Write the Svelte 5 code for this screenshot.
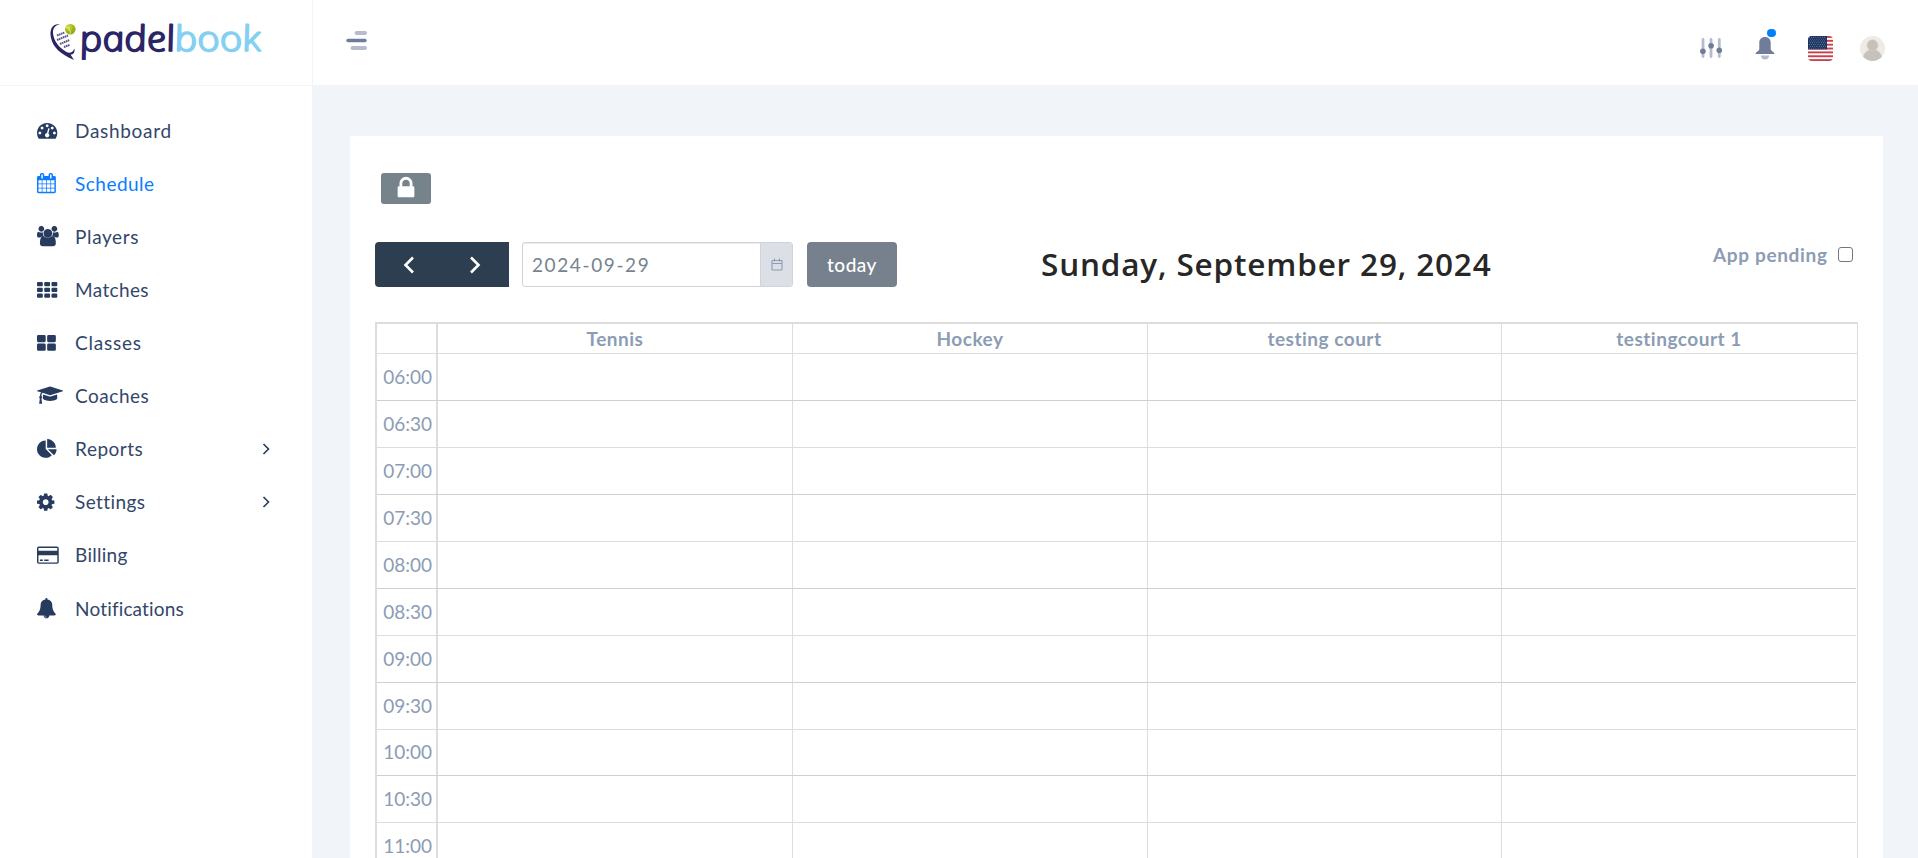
<script>
  const gaugeDot = 'q0-53-37.5-90.5t-90.5-37.5-90.5 37.5-37.5 90.5 37.5 90.5 90.5 37.5 90.5-37.5 37.5-90.5z';
  const bell = 'M912 1696q0-16-16-16-59 0-101.5-42.5t-42.5-101.5q0-16-16-16t-16 16q0 73 51.5 124.5t124.5 51.5q16 0 16-16zm816-288q0 52-38 90t-90 38h-448q0 106-75 181t-181 75-181-75-75-181h-448q-52 0-90-38t-38-90q50-42 91-88t85-119.5 74.5-158.5 50-206 19.5-260q0-152 117-282.5t307-158.5q-8-19-8-39 0-40 28-68t68-28 68 28 28 68q0 20-8 39 190 28 307 158.5t117 282.5q0 139 19.5 260t50 206 74.5 158.5 85 119.5 91 88z';
  const menu = [
    { label: 'Dashboard', track: .68, box: '0 0 1792 1792', d: `M384 1152${gaugeDot}m192-448${gaugeDot}m428 481l101-382q6-26-7.5-48.5t-38.5-29.5-48 6.5-30 39.5l-101 382q-60 5-107 43.5t-63 98.5q-20 77 20 146t117 89 146-20 89-117q16-60-6-117t-72-91zm660-33${gaugeDot}m-640-640${gaugeDot}m448 192${gaugeDot}m320 448q0 261-141 483-19 29-54 29h-1402q-35 0-54-29-141-221-141-483 0-182 71-348t191-286 286-191 348-71 348 71 286 191 191 286 71 348z` },
    { label: 'Schedule', track: .46, active: true, box: '64 0 1792 1792', d: 'M192 1664h288v-288h-288v288zm352 0h320v-288h-320v288zm-352-352h288v-320h-288v320zm352 0h320v-320h-320v320zm-352-384h288v-288h-288v288zm736 736h320v-288h-320v288zm-384-736h320v-288h-320v288zm768 736h288v-288h-288v288zm-384-352h320v-320h-320v320zm-352-864v-288q0-13-9.5-22.5t-22.5-9.5h-64q-13 0-22.5 9.5t-9.5 22.5v288q0 13 9.5 22.5t22.5 9.5h64q13 0 22.5-9.5t9.5-22.5zm736 864h288v-320h-288v320zm-384-384h320v-288h-320v288zm384 0h288v-288h-288v288zm32-480v-288q0-13-9.5-22.5t-22.5-9.5h-64q-13 0-22.5 9.5t-9.5 22.5v288q0 13 9.5 22.5t22.5 9.5h64q13 0 22.5-9.5t9.5-22.5zm384-64v1280q0 52-38 90t-90 38h-1408q-52 0-90-38t-38-90v-1280q0-52 38-90t90-38h128v-96q0-66 47-113t113-47h64q66 0 113 47t47 113v96h384v-96q0-66 47-113t113-47h64q66 0 113 47t47 113v96h128q52 0 90 38t38 90z' },
    { label: 'Players', track: .6, box: '0 0 1792 1792', d: 'M384 0a256 256 0 1 0 .1 0zM1536 0a256 256 0 1 0 .1 0zM960 256a384 384 0 1 0 .1 0zM490 900q-125 5-220 124H140Q0 1024 0 860 0 512 120 512q20 0 80 35t184 35q70 0 135-22-7 50-7 80 0 140 80 260zM1430 900q125 5 220 124h130q140 0 140-164 0-348-120-348-20 0-80 35t-184 35q-70 0-135-22 7 50 7 80 0 140-80 260zM1664 1533q0 120-73 190t-194 69H523q-121 0-194-69t-73-190q0-640 322-640 22 0 78 40t136 75 168 35 168-35 136-75 78-40q322 0 322 640z' },
    { label: 'Matches', track: .35, box: '0 0 1792 1792', d: [256, 768, 1280].flatMap(y => [0, 640, 1280].map(x => `M${x + 90} ${y}h332q90 0 90 90v204q0 90-90 90h-332q-90 0-90-90v-204q0-90 90-90z`)).join('') },
    { label: 'Classes', track: .75, box: '0 0 1792 1792', d: [256, 1024].flatMap(y => [0, 896].map(x => `M${x + 120} ${y}h528q120 0 120 120v400q0 120-120 120h-528q-120 0-120-120v-400q0-120 120-120z`)).join('') },
    { label: 'Coaches', track: .5, box: '0 0 1792 1792', d: 'M1774 836l18 316q4 69-82 128t-235 93.5-323 34.5-323-34.5-235-93.5-82-128l18-316 574 181q22 7 48 7t48-7zm530-324q0 23-22 31l-1120 352q-4 1-10 1t-10-1l-652-206q-43 34-71 111.5t-34 178.500q63 36 63 109 0 69-58 107l58 433q2 14-8 25-9 11-24 11h-192q-15 0-24-11-10-11-8-25l58-433q-58-38-58-107 0-73 65-111 11-207 98-330l-333-104q-22-8-22-31t22-31l1120-352q4-1 10-1t10 1l1120 352q22 8 22 31z' },
    { label: 'Reports', track: .5, sub: true, box: '0 0 1792 1792', d: 'M768 890l546 546q-106 108-247.5 168t-298.5 60q-209 0-385.5-103t-279.5-279.5-103-385.5 103-385.5 279.5-279.5 385.5-103v762zm187 6h773q0 157-60 298.5t-168 247.5zm709-128h-768v-768q209 0 385.5 103t279.5 279.5 103 385.5z' },
    { label: 'Settings', track: .4, sub: true, box: '128 0 1792 1792', d: 'M1152 896q0-106-75-181t-181-75-181 75-75 181 75 181 181 75 181-75 75-181zm512-109v222q0 12-8 23t-20 13l-185 28q-19 54-39 91 35 50 107 138 10 12 10 25t-9 23q-27 37-99 108t-94 71q-12 0-26-9l-138-108q-44 23-91 38-16 136-29 186-7 28-36 28h-222q-14 0-24.5-8.5t-11.5-21.5l-28-184q-49-16-90-37l-141 107q-10 9-25 9-14 0-25-11-126-114-165-168-7-10-7-23 0-12 8-23 15-21 51-66.5t54-70.5q-27-50-41-99l-183-27q-13-2-21-12.5t-8-23.5v-222q0-12 8-23t19-13l186-28q14-46 39-92-40-57-107-138-10-12-10-24 0-10 9-23 26-36 98.5-107.5t94.5-71.5q13 0 26 10l138 107q44-23 91-38 16-136 29-186 7-28 36-28h222q14 0 24.5 8.5t11.5 21.5l28 184q49 16 90 37l142-107q9-9 24-9 13 0 25 10 129 119 165 170 7 8 7 22 0 12-8 23-15 21-51 66.5t-54 70.5q26 50 41 98l183 28q13 2 21 12.5t8 23.5z' },
    { label: 'Billing', track: .26, box: '0 0 1792 1792', d: 'M160 128H1760q160 0 160 160V1504q0 160-160 160H160q-160 0-160-160V288q0-160 160-160zM160 256q-32 0-32 32V512H1792V288q0-32-32-32zM128 896V1504q0 32 32 32H1760q32 0 32-32V896zM256 1280h256v128H256zM640 1280h384v128H640z' },
    { label: 'Notifications', track: .15, box: '64 0 1792 1792', d: bell }
  ];
  const courts = ['Tennis', 'Hockey', 'testing court', 'testingcourt 1'];
  const slots = ['06:00', '06:30', '07:00', '07:30', '08:00', '08:30', '09:00', '09:30', '10:00', '10:30', '11:00'];
  const stars = Array.from({ length: 7 }, (_, r) => Array.from({ length: 8 }, (_, c) => [1.3 + c * 2.2 + (r % 2), 1.3 + r * 1.8])).flat();
</script>

<div class="app">
  <aside>
    <div class="brand">
      <svg width="215" height="42" viewBox="0 0 215 42">
        <defs>
          <radialGradient id="ball" cx=".35" cy=".3"><stop offset="0" stop-color="#dbe23a" /><stop offset="1" stop-color="#94ae1c" /></radialGradient>
        </defs>
        <path d="M11 4.500C4 3 0 9 2 18c2 9 9 16 23 22l-3.500-5.500c3 .3 4.500-2 4-6-1.500 4-5 5-8 3.500C9 27 4.500 20 4 13c-.2-5 2.500-8 7-8.500z" fill="#2a2566" />
        <g stroke="#2a2566" stroke-width="2" stroke-dasharray="1.600 .5" opacity=".8">
          <path d="M8 15.500l7.500-3M8 20l11-4.500M11 24l9.500-4M15 27l5.500-2" />
        </g>
        <circle cx="21.300" cy="9.300" r="5.300" fill="url(#ball)" />
        <path d="M17 7.500c3 0 4.500 2.500 4.300 6" fill="none" stroke="#f3f6b8" stroke-width=".8" />
        <g class="logotype">
          <text transform="translate(32.800 31) skewX(12)" textLength="95.500" lengthAdjust="spacingAndGlyphs" fill="#2a2566" stroke="#2a2566">padel</text>
          <text transform="translate(127.500 31) skewX(12)" textLength="86" lengthAdjust="spacingAndGlyphs" fill="#84d0f1" stroke="#84d0f1">book</text>
        </g>
      </svg>
    </div>
    <nav>
      {#each menu as item}
        <a class:active={item.active}>
          <svg class="ico" viewBox={item.box}><path fill-rule={item.label === 'Billing' ? 'evenodd' : 'nonzero'} d={item.d} /></svg>
          <span style:letter-spacing="{item.track}px">{item.label}</span>
          {#if item.sub}<svg class="chev" viewBox="0 0 8 12"><path d="M1.500 1l5 5-5 5" /></svg>{/if}
        </a>
      {/each}
    </nav>
  </aside>

  <div class="main">
    <header>
      <svg class="burger" width="22" height="20" viewBox="0 0 22 20">
        <path d="M10.500 2H19M6.500 17H19" stroke="#b7bccd" stroke-width="4" stroke-linecap="round" />
        <path d="M2 9.500H19" stroke="#717c9b" stroke-width="3.400" stroke-linecap="round" />
      </svg>
      <div class="tools">
        <svg width="22" height="20" viewBox="0 0 22 20">
          <path d="M3 1.500v17M11 1.500v17M19.300 1.500v17" stroke="#b7bccd" stroke-width="2.800" stroke-linecap="round" />
          <g fill="#717c9b"><circle cx="2.900" cy="13.300" r="2.800" /><circle cx="11.100" cy="7.800" r="2.800" /><circle cx="19.300" cy="12.300" r="2.800" /></g>
        </svg>
        <span class="bell">
          <svg width="20" height="23" viewBox="0 0 20 23">
            <path d="M6 18.500h8a4 4 0 0 1-8 0z" fill="#b7bccd" />
            <path d="M10 0c3.700 0 5.700 2.500 5.700 5.500v6.500c0 1.700 3.800 3.300 3.800 5H.5c0-1.700 3.800-3.300 3.800-5V5.500C4.300 2.500 6.300 0 10 0z" fill="#717c9b" />
          </svg>
          <i></i>
        </span>
        <svg class="flag" width="25" height="25" viewBox="0 0 25 25">
          <rect width="25" height="25" fill="#fff" />
          {#each [0, 1, 2, 3, 4, 5, 6] as n}<rect y={n * 3.86} width="25" height="1.900" fill="#c7414c" />{/each}
          <rect width="19" height="13.400" fill="#1b3462" />
          {#each stars as [x, y]}<circle cx={x} cy={y} r=".45" fill="#b4bed2" />{/each}
        </svg>
        <svg class="avatar" width="25" height="25" viewBox="0 0 25 25">
          <clipPath id="round"><circle cx="12.500" cy="12.500" r="12.500" /></clipPath>
          <g clip-path="url(#round)">
            <rect width="25" height="25" fill="#eeebe6" />
            <path d="M2.500 25c0-7 4-11.500 10-11.500s10 4.500 10 11.500z" fill="#c6c2ba" />
            <circle cx="12.500" cy="9.300" r="5.500" fill="#c6c2ba" stroke="#d5d1ca" stroke-width=".6" />
          </g>
        </svg>
      </div>
    </header>

    <section class="card">
      <button class="lock" aria-label="Lock">
        <svg width="26" height="26" viewBox="0 0 1792 1792"><path d="M640 768h512v-192q0-106-75-181t-181-75-181 75-75 181v192zm832 96v576q0 40-28 68t-68 28h-960q-40 0-68-28t-28-68v-576q0-40 28-68t68-28h32v-192q0-184 132-316t316-132 316 132 132 316v192h32q40 0 68 28t28 68z" /></svg>
      </button>
      <div class="toolbar">
        <div class="steps">
          <button aria-label="Previous"><svg width="12" height="18" viewBox="0 0 12 18"><path d="M10 1.500L2.500 9l7.500 7.500" /></svg></button>
          <button aria-label="Next"><svg width="12" height="18" viewBox="0 0 12 18"><path d="M1 1.500L8.500 9 1 16.500" /></svg></button>
        </div>
        <div class="date">
          <div class="field">2024-09-29</div>
          <div class="addon">
            <svg width="12" height="13" viewBox="0 0 12 13"><path d="M1.500 2.500h9q.5 0 .5.500v8.500q0 .5-.5.500h-9q-.5 0-.5-.5V3q0-.5.500-.5zM1 5.500h10M3.500.5v3M8.500.5v3" /></svg>
          </div>
        </div>
        <button class="today"><span>today</span></button>
        <h2>Sunday, September 29, 2024</h2>
        <label><span>App pending</span><i></i></label>
      </div>
      <div class="grid">
        <div class="row head">
          <div class="time"></div>
          {#each courts as court}<div class="cell"><span>{court}</span></div>{/each}
        </div>
        {#each slots as slot, i}
          <div class="row" class:half={i % 2 === 1} class:short={slot === '10:00'}>
            <div class="time">{slot}</div>
            {#each courts as _}<div class="cell"></div>{/each}
          </div>
        {/each}
      </div>
    </section>
  </div>
</div>

<style>
  :global(body) { overflow: hidden; background: #f1f4f9; }
  .app { display: flex; width: 100%; height: 858px; overflow: hidden; font-family: Lato, "Noto Sans", sans-serif; font-size: 19px; color: #8c9cb4; }
  .app * { box-sizing: border-box; }
  button { border: 0; padding: 0; font: inherit; color: #fff; display: flex; align-items: center; justify-content: center; }

  aside { flex: 0 0 313px; background: #fff; border-right: 1px solid #f1f4f9; }
  .brand { height: 86px; padding: 20px 0 0 49px; border-bottom: 1px solid #f3f3f3; }
  .brand svg { display: block; overflow: visible; }
  .logotype { font: italic 300 35px "Open Sans", sans-serif; stroke-width: 1.7; stroke-linejoin: round; }
  nav { padding-top: 17.500px; }
  nav a { display: flex; align-items: center; height: 53.120px; padding-left: 37.300px; color: #263b5e; }
  .ico { width: 20.300px; height: 20.300px; overflow: visible; fill: currentColor; }
  nav span { flex: 1; margin-left: 17.500px; color: #33466a; }
  nav a.active, nav a.active span { color: #0a7cff; }
  .chev { width: 8px; height: 12px; margin-right: 42.500px; fill: none; stroke: #263b5e; stroke-width: 1.6; }

  .main { flex: 1; display: flex; flex-direction: column; }
  header { flex: 0 0 85px; display: flex; justify-content: space-between; background: #fff; padding: 31px 33px 0 33px; }
  .tools { display: flex; align-items: flex-start; }
  .tools > :nth-child(1) { margin: 7px 33.500px 0 0; }
  .bell { position: relative; height: 23px; margin: 6px 33px 0 0; }
  .bell svg { display: block; }
  .bell i { position: absolute; top: -8.500px; left: 11.500px; width: 9px; height: 8px; border-radius: 4px; background: #0080ff; }
  .flag { margin: 5px 27px 0 0; border-radius: 4px; }
  .avatar { margin-top: 5px; }

  .card { flex: 1; margin: 51px 35px 0 37px; padding: 37px 25px 0; background: #fff; }
  .lock { width: 50px; height: 31px; margin-left: 6px; padding-bottom: 1px; border-radius: 3px; background: #76838b; }
  .lock svg { fill: #fff; }
  .toolbar { display: flex; height: 45px; margin-top: 38px; }
  .steps { display: flex; width: 134px; background: #2c3e50; border-radius: 4px 0 0 4px; }
  .steps button { flex: 1; background: none; }
  .steps svg { fill: none; stroke: #fff; stroke-width: 2.6; }
  .date { display: flex; width: 271px; margin: 0 14px 0 13px; border: 1px solid #ced4dd; border-radius: 3px; overflow: hidden; }
  .field { flex: 1; padding-left: 9px; line-height: 43px; color: #76838f; letter-spacing: 1.6px; box-shadow: inset 0 1px 1px #00000013; }
  .addon { width: 32px; padding: 15px 0 0 10px; background: #dcdfe5; border-left: 1px solid #ced4dd; }
  .addon svg { display: block; fill: none; stroke: #8c9cb4; stroke-width: 1.1; }
  .today { width: 90px; border-radius: 4px; background: #76818d; font-weight: 500; letter-spacing: .5px; }
  h2 { flex: 1; margin: 0 0 0 144px; font-family: "Open Sans", sans-serif; font-size: 31.500px; line-height: 44px; font-weight: 600; letter-spacing: .83px; color: #272727; white-space: nowrap; }
  label { display: flex; height: 26px; align-items: center; font-weight: 700; letter-spacing: .66px; margin-right: 5px; }
  label span { margin-top: -2px; }
  label i { width: 15px; height: 15px; margin-left: 10.400px; margin-top: -1px; border: 1px solid #767676; border-radius: 3px; background: #fff; }

  .grid { width: 1483px; margin-top: 35px; border: solid #ddd; border-width: 2px 1px 0 2px; }
  .row { display: grid; grid-template-columns: 61px 355px 355px 354px 354px; height: 47px; margin-right: 1px; border-bottom: 1px solid #d0d0d0; }
  .row.half { border-color: #ddd; }
  .row.short { height: 46px; }
  .row.head { height: 30px; margin-right: 0; border-color: #ddd; font-weight: 700; letter-spacing: .5px; }
  .time { display: flex; align-items: center; justify-content: flex-end; padding: 0 4px 2px 0; border-right: 2px solid #ddd; }
  .cell { display: flex; align-items: center; justify-content: center; border-right: 1px solid #ddd; }
  .cell:last-child { border-right: 0; }
</style>
